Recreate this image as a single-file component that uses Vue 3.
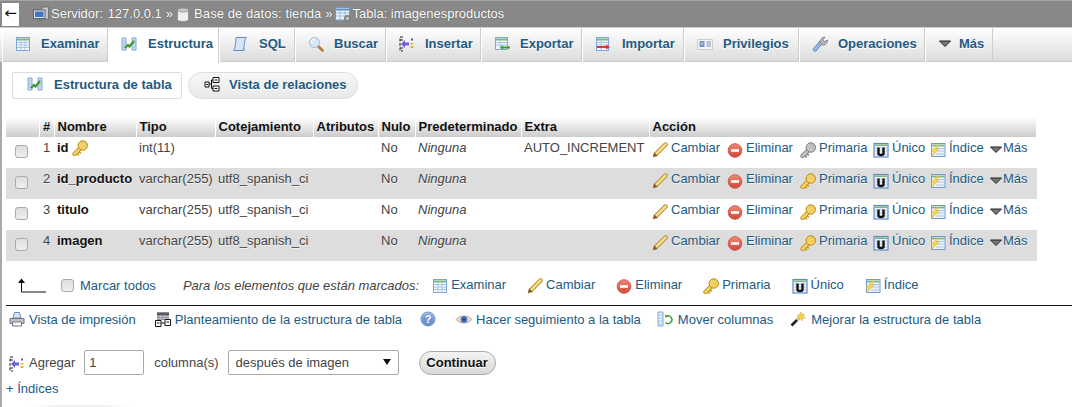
<script setup>
const tabs = [
  { label: 'Examinar', icon: 'browse', w: 106, gap: 10 },
  { label: 'Estructura', icon: 'struct', w: 111, gap: 11 },
  { label: 'SQL', icon: 'sql', w: 76, gap: 11 },
  { label: 'Buscar', icon: 'search', w: 91, gap: 10 },
  { label: 'Insertar', icon: 'insert', w: 95, gap: 10 },
  { label: 'Exportar', icon: 'export', w: 101, gap: 10 },
  { label: 'Importar', icon: 'import', w: 102, gap: 11 },
  { label: 'Privilegios', icon: 'priv', w: 115, gap: 10 },
  { label: 'Operaciones', icon: 'wrench', w: 126, gap: 10 },
  { label: 'Más', icon: 'down', w: 68, gap: 5 }
]
tabs[1].active = true
const rows = [
  { n: 1, name: 'id', key: true, type: 'int(11)', coll: '', extra: 'AUTO_INCREMENT' },
  { n: 2, name: 'id_producto', type: 'varchar(255)', coll: 'utf8_spanish_ci', extra: '' },
  { n: 3, name: 'titulo', type: 'varchar(255)', coll: 'utf8_spanish_ci', extra: '' },
  { n: 4, name: 'imagen', type: 'varchar(255)', coll: 'utf8_spanish_ci', extra: '' }
]
const actionsFor = (r) => [
  { label: 'Cambiar', icon: 'pencil' },
  { label: 'Eliminar', icon: 'del' },
  { label: 'Primaria', icon: r.key ? 'keyg' : 'key' },
  { label: 'Único', icon: 'uniq' },
  { label: 'Índice', icon: 'index' },
  { label: 'Más', icon: 'down', tight: true }
]
const bulk = [
  { label: 'Examinar', icon: 'browse' },
  { label: 'Cambiar', icon: 'pencil' },
  { label: 'Eliminar', icon: 'del' },
  { label: 'Primaria', icon: 'key' },
  { label: 'Único', icon: 'uniq' },
  { label: 'Índice', icon: 'index' }
]
</script>

<template>
  <div class="page">
    <svg class="sprite" aria-hidden="true">
      <defs>
        <linearGradient id="gRed" x1="0" y1="0" x2="0" y2="1"><stop offset="0" stop-color="#f08a78"/><stop offset="1" stop-color="#d2433a"/></linearGradient>
        <linearGradient id="gBlue" x1="0" y1="0" x2="0" y2="1"><stop offset="0" stop-color="#a9c4ea"/><stop offset="1" stop-color="#5d86c4"/></linearGradient>
        <symbol id="browse" viewBox="0 0 16 16"><rect x="1.500" y="1.500" width="13" height="13" fill="#f2f7fc" stroke="#7ea6d6"/><path d="M2 3.500h12" stroke="#7fb37f" stroke-width="2"/><path d="M2 6.500h12M2 9h12M2 11.500h12M6 5v9M10 5v9" stroke="#a9c6e6"/></symbol>
        <symbol id="struct" viewBox="0 0 16 16"><path d="M1 2h4v12H1zM11 2h4v12h-4z" fill="#cfe0f4" stroke="#7ea6d6"/><path d="M1 5h4M1 8h4M1 11h4M11 5h4M11 8h4M11 11h4" stroke="#9dbde0"/><path d="M4 12l3-3 1.500 1.500L13 5" fill="none" stroke="#3f9a2e" stroke-width="2.200"/></symbol>
        <symbol id="sql" viewBox="0 0 16 16"><path d="M4 1.500h10.500c-1.500 1-1.500 3-2 6s-1 6-1.500 7H1.500c1-.8 1.500-3 2-6s0-6 .5-7z" fill="#d6e4f6" stroke="#5f8cc8"/><path d="M11 14.500c1 0 1.500-.5 1.800-1.500" fill="none" stroke="#5f8cc8"/></symbol>
        <symbol id="search" viewBox="0 0 16 16"><path d="M10 10l4.500 4.500" stroke="#b47a38" stroke-width="2.600" stroke-linecap="round"/><circle cx="6.500" cy="6.500" r="5" fill="#d7e7f6" stroke="#a6b8c9"/><path d="M3.500 6a3 3 0 0 1 3-3" fill="none" stroke="#fff" stroke-width="1.200"/></symbol>
        <symbol id="insert" viewBox="0 0 16 16"><path d="M4 1H1v14h3" fill="none" stroke="#222" stroke-dasharray="3 1.500"/><path d="M1 4h3M1 12h3" stroke="#222"/><path d="M2 8l4-4v2.500h4v3H6V12z" fill="#6a5fd6"/><rect x="12" y="2.500" width="2" height="2" fill="#3c5fc9"/><rect x="11.500" y="7" width="3" height="1.500" fill="#e0b92a"/><rect x="11.500" y="10" width="3" height="2" fill="#e0b92a"/></symbol>
        <symbol id="export" viewBox="0 0 16 16"><rect x="1.500" y="1.500" width="12" height="12" fill="#f2f7fc" stroke="#7ea6d6"/><path d="M2 3.500h11" stroke="#7fb37f" stroke-width="2"/><path d="M2 6.500h11M2 9h11M6 5v8" stroke="#a9c6e6"/><path d="M6 11.500l3-2.500v1.500h7v2H9V14z" fill="#3f9a2e"/></symbol>
        <symbol id="import" viewBox="0 0 16 16"><rect x="1.500" y="1.500" width="12" height="13" fill="#f2f7fc" stroke="#7ea6d6"/><path d="M2 3.500h11" stroke="#7fb37f" stroke-width="2"/><path d="M2 6.500h11M2 9h11M6 5v9" stroke="#a9c6e6"/><path d="M2 10h9V8.500l4 2.500-4 2.500V12H2z" fill="#ef2b38"/></symbol>
        <symbol id="priv" viewBox="0 0 16 16"><path d="M.500 3.500h15v10H.500z" fill="#f4f4f4" stroke="#ccc"/><rect x="2.500" y="5" width="5" height="6" fill="#5d9ae0"/><circle cx="5" cy="7.500" r="1.300" fill="#e9b46c"/><path d="M9.500 6h4.500M9.500 8h4.500M9.500 10h4.500" stroke="#7f93a8"/></symbol>
        <symbol id="wrench" viewBox="0 0 16 16"><path d="M3 13.500l6-7" stroke="#567fb8" stroke-width="4.200" stroke-linecap="round"/><path d="M3 13.500l6-7" stroke="#9dbbe6" stroke-width="2.600" stroke-linecap="round"/><path d="M8.500 7.500C7.500 4.500 9.500 1 13 1l-2 2.800 1.500 1.700L15.500 4c.3 3.500-3 5.500-5.500 5z" fill="#b5b5b5" stroke="#7b7b7b" stroke-width=".8"/></symbol>
        <symbol id="down" viewBox="0 0 16 16"><path d="M1.500 5h11L7 10.500z" fill="#777" stroke="#222" stroke-width="1"/></symbol>
        <symbol id="rel" viewBox="0 0 16 16"><path d="M1 6h4v5H1zM9 1.500h6v5H9zM9 10h6v5H9z" fill="#fff" stroke="#111"/><path d="M5 8h2.500M7.500 4v8.500M7.500 4H9M7.500 12.500H9M10.500 4h3M10.500 12.500h3M2 8.500h2" stroke="#111"/></symbol>
        <symbol id="server" viewBox="0 0 16 16"><path d="M9 1h6.500v12H9z" fill="#c4c8cc" stroke="#666" stroke-width=".8"/><rect x=".500" y="4" width="11.500" height="8.500" fill="#dde3ea" stroke="#5a6470"/><rect x="2" y="5.500" width="8.500" height="5.500" fill="#3f74cc"/><path d="M4 14.500h5" stroke="#777" stroke-width="1.600"/></symbol>
        <symbol id="db" viewBox="0 0 16 16"><path d="M2.500 4v9.500c0 1.300 2.500 2 5.500 2s5.500-.7 5.500-2V4z" fill="#eee" stroke="#8c8c8c" stroke-width=".8"/><ellipse cx="8" cy="4" rx="5.500" ry="2" fill="#c9c9c9" stroke="#8c8c8c" stroke-width=".8"/></symbol>
        <symbol id="table" viewBox="0 0 16 16"><rect x=".500" y="1.500" width="14" height="12.500" fill="#e9f1fb" stroke="#6d9bd6"/><path d="M1 3.500h13" stroke="#5d8cc8" stroke-width="2"/><path d="M1 7h13M1 10h13M5 5v9M10 5v9" stroke="#9dbde0"/><circle cx="12.500" cy="12.500" r="3" fill="#9a9a9a" stroke="#6f6f6f"/><circle cx="12.500" cy="12.500" r="1" fill="#e6e6e6"/></symbol>
        <symbol id="pencil" viewBox="0 0 16 16"><path d="M13.500 2.500L4.500 11.500" stroke="#a87c22" stroke-width="4.400" stroke-linecap="round"/><path d="M13.500 2.500L4.500 11.500" stroke="#f7dc8a" stroke-width="2.800" stroke-linecap="round"/><path d="M.800 15.200l1.200-5 3.800 3.800z" fill="#8a5a1e"/></symbol>
        <symbol id="del" viewBox="0 0 16 16"><circle cx="8" cy="8.500" r="6.800" fill="url(#gRed)" stroke="#cf5a4e"/><rect x="4" y="7.200" width="8" height="2.600" fill="#fff"/></symbol>
        <symbol id="key" viewBox="0 0 16 16"><path d="M9 7.500L2.500 14" stroke="#b68a14" stroke-width="4.200" stroke-linecap="round"/><path d="M9 7.500L2.500 14" stroke="#f7d263" stroke-width="2.600" stroke-linecap="round"/><path d="M5 13.500l1.800 1.800M7 11.500l1.800 1.800" stroke="#c99a1e" stroke-width="1.800"/><circle cx="10.800" cy="5.500" r="4.700" fill="#f7d263" stroke="#b68a14"/><circle cx="11.800" cy="4.300" r="1.300" fill="#fff5cf" stroke="#c49a22" stroke-width=".6"/></symbol>
        <symbol id="keyg" viewBox="0 0 16 16"><path d="M9 7.500L2.500 14" stroke="#777" stroke-width="4.200" stroke-linecap="round"/><path d="M9 7.500L2.500 14" stroke="#c6c6c6" stroke-width="2.600" stroke-linecap="round"/><path d="M5 13.500l1.800 1.800M7 11.500l1.800 1.800" stroke="#8c8c8c" stroke-width="1.800"/><circle cx="10.800" cy="5.500" r="4.700" fill="#c6c6c6" stroke="#777"/><circle cx="11.800" cy="4.300" r="1.300" fill="#eee" stroke="#888" stroke-width=".6"/></symbol>
        <symbol id="uniq" viewBox="0 0 16 16"><rect x="1" y="1.500" width="14" height="13.500" fill="#eef3fa" stroke="#5f8cc8" stroke-width="1.200"/><path d="M2 3.200h12" stroke="#7fb37f" stroke-width="1.600"/><path d="M2 6h12M2 9h12M2 12h12" stroke="#b5cde8"/><path d="M5.500 5.500v6c0 2 5 2 5 0v-6" fill="none" stroke="#111" stroke-width="2.400"/></symbol>
        <symbol id="index" viewBox="0 0 16 16"><rect x="1.500" y="1.500" width="13.500" height="13" fill="#eef3fa" stroke="#6d9bd6"/><path d="M2 3.500h12.500" stroke="#7fb37f" stroke-width="1.800"/><path d="M6 6.500h8.500M6 9h8.500M6 12h8.500" stroke="#a9c6e6"/><path d="M7 3.500L1 9.500h3L1.500 14.500 9 7.500H6L9 3.500z" fill="#f4d45a" stroke="#e0b92a" stroke-width=".5"/></symbol>
        <symbol id="print" viewBox="0 0 16 16"><path d="M4 7l1.500-5.500h5L12 7z" fill="#d6e4f6" stroke="#6d8fbd"/><path d="M1 7.500h14v5H1z" fill="#bfc4c9" stroke="#6e7680"/><path d="M3.500 11h9v4h-9z" fill="#fff" stroke="#6e7680"/></symbol>
        <symbol id="schema" viewBox="0 0 16 16"><rect x="2" y="1" width="12" height="8" fill="#8a8a92"/><path d="M2 3h12" stroke="#5a5a62" stroke-width="2"/><path d="M2 5.500h12M2 7.500h12M6 4v5M10 4v5" stroke="#c8c8ce" stroke-width=".8"/><path d="M.500 9.500h5.500v6H.500zM10 8.500h5.500v6H10z" fill="#fff" stroke="#111"/><path d="M6 12h4M2 12h2.500M11.500 11h2.500" stroke="#111"/></symbol>
        <symbol id="help" viewBox="0 0 16 16"><circle cx="8" cy="8" r="7" fill="url(#gBlue)" stroke="#6f93c8"/><circle cx="8" cy="8" r="5" fill="#6e94cf"/><text x="8" y="12" text-anchor="middle" font-family="Liberation Sans" font-weight="700" font-size="11" fill="#fff">?</text></symbol>
        <symbol id="eye" viewBox="0 0 16 16"><path d="M.500 8.500C3 4 13 4 15.500 8.500 13 13 3 13 .500 8.500z" fill="#f1e2d2" stroke="#b99a7c"/><circle cx="8" cy="8.500" r="3.400" fill="#4d7cc4"/><circle cx="8" cy="8.500" r="1.400" fill="#1d3f78"/></symbol>
        <symbol id="move" viewBox="0 0 16 16"><path d="M1 1h5v14H1z" fill="#e4eefa" stroke="#7ea6d6"/><path d="M1 4h5M1 7h5M1 10h5M1 13h5" stroke="#a9c6e6"/><path d="M9 5.500a3.800 3.800 0 1 1-.5 6" fill="none" stroke="#3f9a2e" stroke-width="1.500"/><path d="M8 3.500l3 1.500-2.500 2z" fill="#3f9a2e"/></symbol>
        <symbol id="wand" viewBox="0 0 16 16"><path d="M1.500 14.500L9 7" stroke="#222" stroke-width="2.600"/><path d="M7 9l2-2" stroke="#ddd" stroke-width="2.600"/><path d="M11 1l.8 2.500L14.500 3l-1.200 2.300L15.500 7l-2.800.3L12 10l-1.500-2.300L8 8.500l1-2.600L7 4l2.700-.2z" fill="#f5d33c" stroke="#dba92a" stroke-width=".5"/></symbol>
        <symbol id="up" viewBox="0 0 28 16"><path d="M3.500 5v10H28" fill="none" stroke="#111"/><path d="M0 6l3.500-4.500L7 6z" fill="#111"/></symbol>
      </defs>
    </svg>

    <header class="crumbs">
      <span class="back">←</span>
      <svg class="ic srv"><use href="#server"/></svg>
      <span class="crumb c1">Servidor: 127.0.0.1</span>
      <span class="sep">»</span>
      <svg class="ic dbi"><use href="#db"/></svg>
      <span class="crumb c2">Base de datos: tienda</span>
      <span class="sep">»</span>
      <svg class="ic tbi"><use href="#table"/></svg>
      <span class="crumb">Tabla: imagenesproductos</span>
    </header>

    <nav class="tabs">
      <a v-for="t in tabs" :key="t.label" class="tab" :class="{ active: t.active }" :style="{ width: t.w + 'px', gap: t.gap + 'px' }">
        <svg class="ic"><use :href="'#' + t.icon"/></svg>
        <span>{{ t.label }}</span>
      </a>
    </nav>

    <main class="content">
      <div class="subtabs">
        <a class="sub first"><svg class="ic"><use href="#struct"/></svg>Estructura de tabla</a>
        <a class="sub pill"><svg class="ic"><use href="#rel"/></svg>Vista de relaciones</a>
      </div>

      <table class="grid">
        <colgroup>
          <col style="width:33px"><col style="width:15px"><col style="width:82px"><col style="width:79px"><col style="width:98px">
          <col style="width:65px"><col style="width:37px"><col style="width:106px"><col style="width:128px"><col>
        </colgroup>
        <thead>
          <tr>
            <th></th><th class="num">#</th><th>Nombre</th><th>Tipo</th><th>Cotejamiento</th><th>Atributos</th><th>Nulo</th><th>Predeterminado</th><th>Extra</th><th>Acción</th>
          </tr>
        </thead>
        <tbody>
          <tr v-for="(r, i) in rows" :key="r.n" :class="{ odd: i % 2 === 1 }">
            <td class="chk"><input type="checkbox" class="cb"></td>
            <td class="num">{{ r.n }}</td>
            <td class="name">{{ r.name }}<svg v-if="r.key" class="ic keyi"><use href="#key"/></svg></td>
            <td>{{ r.type }}</td>
            <td>{{ r.coll }}</td>
            <td></td>
            <td>No</td>
            <td class="it">Ninguna</td>
            <td class="ex">{{ r.extra }}</td>
            <td class="acts">
              <div class="actgrid">
                <a v-for="a in actionsFor(r)" :key="a.label" class="act" :class="{ tight: a.tight }"><svg class="ic"><use :href="'#' + a.icon"/></svg>{{ a.label }}</a>
              </div>
            </td>
          </tr>
        </tbody>
      </table>

      <div class="bulk">
        <svg class="up"><use href="#up"/></svg>
        <label class="all"><input type="checkbox" class="cb"><span>Marcar todos</span></label>
        <em class="with">Para los elementos que están marcados:</em>
        <a v-for="b in bulk" :key="b.label" class="act"><svg class="ic"><use :href="'#' + b.icon"/></svg><span>{{ b.label }}</span></a>
      </div>

      <hr class="rule">

      <div class="links">
        <a class="l1"><svg class="ic"><use href="#print"/></svg>Vista de impresión</a>
        <a class="l2"><svg class="ic"><use href="#schema"/></svg>Planteamiento de la estructura de tabla</a>
        <svg class="ic hp"><use href="#help"/></svg>
        <a class="l3"><svg class="ic"><use href="#eye"/></svg>Hacer seguimiento a la tabla</a>
        <a class="l4"><svg class="ic"><use href="#move"/></svg>Mover columnas</a>
        <a class="l5"><svg class="ic"><use href="#wand"/></svg>Mejorar la estructura de tabla</a>
      </div>

      <form class="add" @submit.prevent>
        <svg class="ic"><use href="#insert"/></svg>
        <span class="lb">Agregar</span>
        <input class="field num-in" value="1">
        <span class="lb col">columna(s)</span>
        <span class="selwrap">
          <select class="field sel"><option>después de imagen</option></select>
        </span>
        <button class="go" type="button">Continuar</button>
      </form>

      <a class="idx">+ Índices</a>
      <div class="tail"></div>
    </main>
  </div>
</template>

<style>
html, body { margin: 0; background: #fff; }
</style>

<style scoped>
.page {
  width: 1072px;
  height: 407px;
  overflow: hidden;
  position: relative;
  font: 13px/15px "Liberation Sans", Arial, sans-serif;
  color: #444;
  background: #fff;
}
.sprite { position: absolute; width: 0; height: 0; }
.ic { width: 16px; height: 16px; flex: none; display: block; }
a { color: #235a81; text-decoration: none; }

.crumbs {
  height: 26px;
  background: #888;
  border-top: 1px solid #a4a4a4;
  display: flex;
  align-items: center;
  color: #fff;
  text-shadow: 0 0 1px #444;
}
.crumb, .sep { position: relative; top: -1px; }
.back {
  width: 17px;
  height: 23px;
  margin-left: 2px;
  background: #fff;
  color: #111;
  text-shadow: none;
  font: 15px/21px "DejaVu Sans", sans-serif;
  text-align: center;
}
.srv { margin-left: 14px; }
.crumb { margin-left: 2px; white-space: nowrap; }
.c1 { word-spacing: 1px; }
.c2 { margin-left: 1px; letter-spacing: .07px; }
.sep { margin: 0 4px; }
.dbi { margin-left: -2px; margin-right: 2px; }
.tbi { margin-left: -2px; }

.tabs {
  height: 35px;
  display: flex;
  padding-left: 2px;
  background: linear-gradient(#fff, #dcdcdc);
  border-top: 1px solid #ccc;
  border-bottom: 1px solid #ccc;
  box-sizing: border-box;
}
.tab {
  box-sizing: border-box;
  height: 34px;
  display: flex;
  align-items: center;
  padding: 0 0 3px 12px;
  font-weight: 700;
  border-right: 1px solid #ccc;
  border-left: 1px solid #fff;
  text-shadow: 0 1px 0 #fff;
  white-space: nowrap;
}
.tab.active { background: #fff; height: 35px; padding-bottom: 4px; }

.content {
  padding: 10px 0 0 4px;
  border-left: 2px solid #aaa;
  height: 345px;
  box-sizing: border-box;
}
.subtabs { display: flex; gap: 6px; height: 27px; margin-left: 6px; }
.sub {
  display: flex;
  align-items: center;
  gap: 11px;
  box-sizing: border-box;
  padding-bottom: 3px;
  font-weight: 700;
  text-shadow: 0 1px 0 #fff;
  white-space: nowrap;
}
.first {
  width: 170px;
  padding-left: 14px;
  border: 1px solid #ddd;
  border-radius: 2px;
  background: #fff;
}
.pill {
  width: 170px;
  padding-left: 15px;
  gap: 9px;
  border: 1px solid #ddd;
  border-radius: 14px;
  background: linear-gradient(#f8f8f8, #e8e8e8);
}

.grid {
  margin-top: 18px;
  width: 1031px;
  border-collapse: collapse;
  table-layout: fixed;
}
th {
  height: 20px;
  padding: 0 0 2px 3px;
  text-align: left;
  font-weight: 700;
  color: #111;
  background: linear-gradient(#fff, #ccc);
  border-right: 1px solid #fff;
  box-sizing: border-box;
  white-space: nowrap;
  overflow: hidden;
}
td {
  height: 31px;
  padding: 3px 0 0 3px;
  box-sizing: border-box;
  vertical-align: top;
  white-space: nowrap;
}
.odd td { background: #ddd; text-shadow: 0 1px 0 #f4f4f4; }
.num { text-align: center; padding-left: 0; }
.chk { padding: 8px 0 0 9px; }
.name { font-weight: 700; color: #111; }
.name .keyi { display: inline-block; vertical-align: -4px; margin-left: 3px; }
.it { font-style: italic; }
.actgrid { display: grid; grid-template-columns: 75px 73px 73px 57px 60px 1fr; }
.act { display: flex; gap: 3px; white-space: nowrap; }
.act .ic { margin-top: 2px; }
.tight { gap: 0; margin-left: -1px; }
.tight .ic { margin-right: -2px; }

.cb {
  appearance: none;
  -webkit-appearance: none;
  display: block;
  margin: 0;
  width: 13px;
  height: 13px;
  box-sizing: border-box;
  border: 1px solid #aaa;
  border-radius: 3px;
  background: linear-gradient(#dedede, #eee);
}

.bulk {
  display: flex;
  align-items: center;
  height: 32px;
  margin-top: 8px;
}
.up { width: 28px; height: 16px; margin-left: 12px; flex: none; }
.all { display: flex; align-items: center; gap: 6px; margin-left: 15px; color: #235a81; }
.with { margin-left: 27px; margin-right: 13px; white-space: nowrap; }
.bulk .act { margin-right: 21px; }
.bulk .act .ic { margin-top: 1px; }

.rule { margin: 4px 0 0; height: 1px; border: 0; background: #111; width: 1066px; }

.links { display: flex; align-items: center; height: 16px; margin-top: 5px; white-space: nowrap; }
.links a { display: flex; gap: 4px; align-items: center; }
.l1 { margin-left: 3px; }
.l2 { margin-left: 19px; letter-spacing: .03px; }
.hp { margin-left: 18px; }
.l3 { margin-left: 20px; }
.l4 { margin-left: 16px; gap: 5px !important; }
.l5 { margin-left: 17px; letter-spacing: .03px; }
.l5 .ic { margin-right: 1px; }

.add { display: flex; align-items: center; height: 25px; margin-top: 23px; }
.add > .ic { margin-left: 3px; margin-top: 2px; }
.lb { margin-left: 4px; color: #444; }
.field {
  box-sizing: border-box;
  height: 25px;
  border: 1px solid #aaa;
  border-radius: 2px;
  background: #fff;
  font: 13px "Liberation Sans", Arial, sans-serif;
  color: #444;
  outline: 0;
}
.num-in { width: 60px; margin-left: 9px; padding: 0 4px; }
.col { margin-left: 10px; }
.selwrap { position: relative; margin-left: 9px; display: block; height: 25px; }
.selwrap::after {
  content: "";
  position: absolute;
  right: 8px;
  top: 9px;
  border: 4px solid transparent;
  border-top: 6px solid #111;
  border-bottom: 0;
}
.sel { width: 171px; padding: 0 7px; appearance: none; -webkit-appearance: none; display: block; }
.go {
  box-sizing: border-box;
  width: 77px;
  height: 24px;
  margin-left: 20px;
  padding: 0;
  border: 1px solid #aaa;
  border-radius: 12px;
  background: linear-gradient(#f4f4f4, #d8d8d8);
  font: 700 13px "Liberation Sans", Arial, sans-serif;
  color: #111;
  text-shadow: 0 1px 0 #fff;
}
.idx { display: block; margin-top: 6px; }
.tail {
  width: 100px;
  height: 3px;
  margin: 9px 0 0 24px;
  background: linear-gradient(90deg, #fff, #f0f0f0 30%, #f0f0f0 70%, #fff);
}
</style>
